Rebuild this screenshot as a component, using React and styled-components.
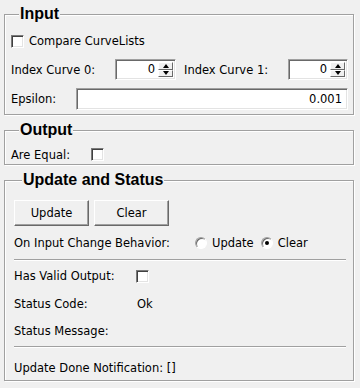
import styled, { createGlobalStyle } from "styled-components";

const GlobalStyle = createGlobalStyle`
  html, body {
    margin: 0;
    padding: 0;
    background: #f0f0f0;
  }
  body {
    font-family: "DejaVu Sans", "Liberation Sans", sans-serif;
    font-size: 11.5px;
    color: #000;
  }
`;

const Page = styled.div`
  width: 360px;
  height: 388px;
  box-sizing: border-box;
  padding: 5px 6px 0 4px;
  display: flex;
  flex-direction: column;
  gap: 6px;
  background: #f0f0f0;
  overflow: hidden;
`;

const Group = styled.fieldset`
  margin: 0;
  padding: 0 ${(p) => p.$right || 5}px ${(p) => p.$bottom || 0}px ${(p) => p.$left || 6}px;
  border: 1px solid #a0a0a0;
  box-shadow: inset 1px 1px 0 #fff, 1px 1px 0 #fff;
  min-width: 0;
  width: 350px;
  box-sizing: border-box;
`;

const Title = styled.legend`
  font-family: "Liberation Sans", Arial, sans-serif;
  font-weight: bold;
  font-size: 16px;
  line-height: 18px;
  padding: 0 1px;
  margin-left: 8px;
  background: #f0f0f0;
`;

const Row = styled.div`
  display: flex;
  align-items: center;
  height: ${(p) => p.$h || 22}px;
  margin-top: ${(p) => p.$mt || 0}px;
  white-space: nowrap;
`;

const Label = styled.span`
  display: inline-block;
  width: ${(p) => (p.$w ? `${p.$w}px` : "auto")};
  flex: none;
`;

const Check = styled.span`
  display: inline-block;
  box-sizing: border-box;
  width: 13px;
  height: 13px;
  flex: none;
  background: #fff;
  border-top: 1px solid #7a7a7a;
  border-left: 1px solid #7a7a7a;
  border-right: 1px solid #fff;
  border-bottom: 1px solid #fff;
  box-shadow: inset 1px 1px 0 #404040, inset -1px -1px 0 #e3e3e3;
  margin-right: ${(p) => p.$mr || 0}px;
`;

const SpinBox = styled.div`
  display: flex;
  box-sizing: border-box;
  width: ${(p) => p.$w}px;
  height: 21px;
  flex: none;
  background: #fff;
  border-top: 1px solid #a0a0a0;
  border-left: 1px solid #a0a0a0;
  border-right: 1px solid #fff;
  border-bottom: 1px solid #fff;
  box-shadow: inset 1px 1px 0 #696969, inset -1px -1px 0 #e3e3e3;
  padding: 2px;
`;

const SpinValue = styled.span`
  flex: 1;
  text-align: right;
  padding-right: 3px;
  line-height: 15px;
`;

const Arrows = styled.div`
  display: flex;
  flex-direction: column;
  width: 15px;
`;

const ArrowBtn = styled.div`
  flex: 1;
  box-sizing: border-box;
  display: flex;
  align-items: center;
  justify-content: center;
  background: #f0f0f0;
  border-top: 1px solid #fff;
  border-left: 1px solid #fff;
  border-right: 1px solid #696969;
  border-bottom: 1px solid #696969;
`;

const Tri = styled.span`
  width: 0;
  height: 0;
  border-left: 3.5px solid transparent;
  border-right: 3.5px solid transparent;
  ${(p) =>
    p.$up
      ? "border-bottom: 4px solid #000;"
      : "border-top: 4px solid #000;"}
`;

const LineEdit = styled.div`
  box-sizing: border-box;
  width: ${(p) => p.$w}px;
  height: 22px;
  flex: none;
  background: #fff;
  border-top: 1px solid #a0a0a0;
  border-left: 1px solid #a0a0a0;
  border-right: 1px solid #fff;
  border-bottom: 1px solid #fff;
  box-shadow: inset 1px 1px 0 #696969, inset -1px -1px 0 #e3e3e3;
  text-align: right;
  padding: 0 5px;
  line-height: 20px;
`;

const Button = styled.button`
  box-sizing: border-box;
  width: 75px;
  height: 26px;
  margin: 0 5px 0 0;
  padding: 0;
  font: inherit;
  color: #000;
  background: #f0f0f0;
  border-top: 1px solid #fff;
  border-left: 1px solid #fff;
  border-right: 1px solid #696969;
  border-bottom: 1px solid #696969;
  box-shadow: inset -1px -1px 0 #a0a0a0;
`;

const Radio = styled.span`
  position: relative;
  display: inline-block;
  box-sizing: border-box;
  width: 12px;
  height: 12px;
  flex: none;
  border-radius: 50%;
  background: #fff;
  border: 1px solid;
  border-color: #a0a0a0 #fff #fff #a0a0a0;
  box-shadow: inset 1px 1px 0 #696969;
  margin-right: 5px;
  &::after {
    content: "";
    display: ${(p) => (p.$on ? "block" : "none")};
    position: absolute;
    left: 3px;
    top: 3px;
    width: 4px;
    height: 4px;
    border-radius: 50%;
    background: #000;
  }
`;

const RadioText = styled.span`
  margin-right: 7px;
`;

const Separator = styled.div`
  height: 1px;
  background: #a0a0a0;
  border-bottom: 1px solid #fff;
  width: 332px;
  margin-top: ${(p) => p.$mt || 0}px;
`;

function Spin({ w, value }) {
  return (
    <SpinBox $w={w}>
      <SpinValue>{value}</SpinValue>
      <Arrows>
        <ArrowBtn>
          <Tri $up />
        </ArrowBtn>
        <ArrowBtn>
          <Tri />
        </ArrowBtn>
      </Arrows>
    </SpinBox>
  );
}

export default function App() {
  return (
    <>
      <GlobalStyle />
      <Page>
        <Group $bottom={4}>
          <Title>Input</Title>
          <Row $mt={7} $h={22}>
            <Check $mr={5} />
            <span>Compare CurveLists</span>
          </Row>
          <Row $mt={7} $h={21}>
            <Label $w={104}>Index Curve 0:</Label>
            <Spin w={61} value="0" />
            <Label $w={8} />
            <Label $w={104}>Index Curve 1:</Label>
            <Spin w={60} value="0" />
          </Row>
          <Row $mt={8} $h={22}>
            <Label $w={65}>Epsilon:</Label>
            <LineEdit $w={272}>0.001</LineEdit>
          </Row>
        </Group>

        <Group>
          <Title>Output</Title>
          <Row $mt={6} $h={19}>
            <Label $w={80}>Are Equal:</Label>
            <Check />
          </Row>
        </Group>

        <Group $left={9} $right={7} $bottom={2}>
          <Title>Update and Status</Title>
          <Row $mt={11} $h={26}>
            <Button>Update</Button>
            <Button>Clear</Button>
          </Row>
          <Row $mt={7} $h={20}>
            <Label $w={181}>On Input Change Behavior:</Label>
            <Radio />
            <RadioText>Update</RadioText>
            <Radio $on />
            <RadioText>Clear</RadioText>
          </Row>
          <Separator $mt={6} />
          <Row $mt={4} $h={22}>
            <Label $w={122}>Has Valid Output:</Label>
            <Check />
          </Row>
          <Row $mt={6} $h={22}>
            <Label $w={123}>Status Code:</Label>
            <span>Ok</span>
          </Row>
          <Row $mt={5} $h={22}>
            <Label>Status Message:</Label>
          </Row>
          <Separator $mt={4} />
          <Row $mt={10} $h={20}>
            <Label>Update Done Notification: []</Label>
          </Row>
        </Group>
      </Page>
    </>
  );
}
